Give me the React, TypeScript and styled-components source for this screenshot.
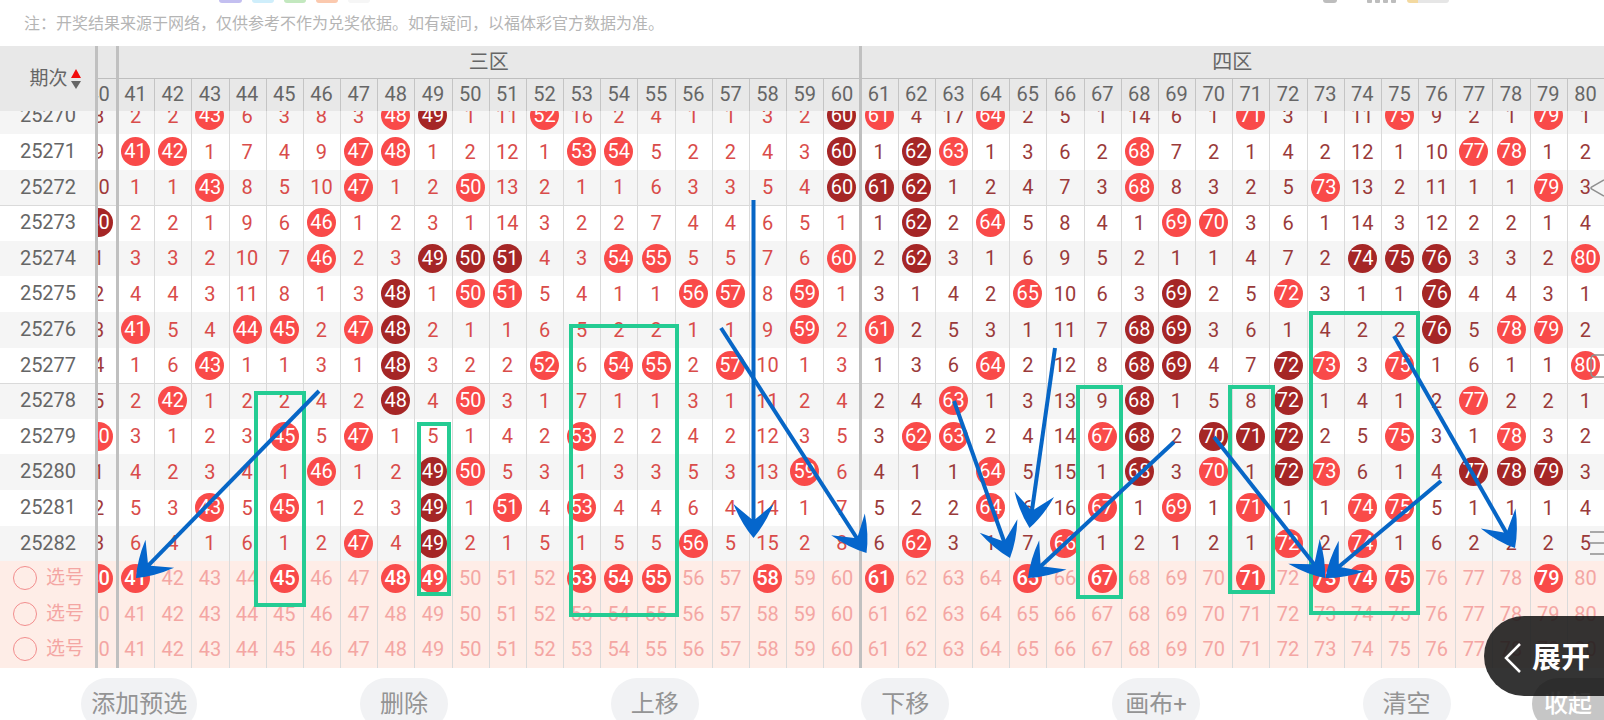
import React, { useState } from 'react';
import styled, { createGlobalStyle, css } from 'styled-components';

const RED = '#f94a49';
const DARK = '#a52626';
const LINE = '#dadada';
const THICK = '#c0c0c0';

const GlobalStyle = createGlobalStyle`
  * { box-sizing: border-box; }
  body {
    margin: 0;
    background: #fff;
    font-family: Roboto, 'Noto Sans CJK SC', sans-serif;
  }
  button { font-family: inherit; border: 0; padding: 0; cursor: pointer; }
`;

const Page = styled.div`
  position: relative;
  height: 100vh;
  overflow: hidden;
  background: #fff;
`;

const StatusBar = styled.div`
  display: flex;
  justify-content: space-between;
  height: 3px;
  padding: 0 155px 0 219px;
`;

const StatusGroup = styled.div<{ $gap: number }>`
  display: flex;
  gap: ${(p) => p.$gap}px;
`;

const StatusChip = styled.span<{ $w: number; $c: string }>`
  width: ${(p) => p.$w}px;
  height: 3px;
  background: ${(p) => p.$c};
  border-radius: 0 0 4px 4px;
`;

const Battery = styled.span`
  width: 42px;
  height: 3px;
  border-radius: 0 0 4px 4px;
  background: linear-gradient(to right, #f3d9a0 11px, #e6e6e6 11px);
`;

const SignalBar = styled.span`
  width: 5px;
  height: 3px;
  background: #bdbdbd;
  border-radius: 0 0 1px 1px;
`;

const Note = styled.p`
  margin: 0;
  padding: 9px 24px 10px;
  font-size: 16px;
  line-height: 24px;
  color: #b5b5b5;
`;

const Chart = styled.table`
  display: block;
  width: 100%;
  font-size: 20px;
  line-height: 24px;
`;

const columns = css`
  display: grid;
  grid-template-columns: 98px 19px repeat(40, minmax(0, 1fr));
`;

const Head = styled.thead`
  ${columns}
  grid-template-rows: 33px 32px;
  position: relative;
  z-index: 1;
  background: #e8e8e8;
  color: #666;
`;

const HeadRow = styled.tr`
  display: contents;
`;

const verticalLine = css<{ $thick?: boolean; $first?: boolean; $line?: string }>`
  box-shadow: ${(p) =>
    p.$thick
      ? `-1px 0 0 ${THICK}, inset 2px 0 0 ${THICK}`
      : p.$first
        ? 'none'
        : `inset 1px 0 0 ${p.$line || LINE}`};
`;

const HeadCell = styled.th<{ $thick?: boolean; $first?: boolean; $line?: string }>`
  display: flex;
  align-items: center;
  justify-content: center;
  padding: 0 0 2px;
  font-weight: 400;
  ${verticalLine}
`;

const ZoneCell = styled(HeadCell)<{ $span: number }>`
  grid-column: span ${(p) => p.$span};
  padding: 0;
  border-bottom: 1px solid #bebebe;
`;

const PeriodHead = styled.th`
  grid-row: 1 / span 2;
  display: flex;
  align-items: center;
  justify-content: center;
  padding: 0 0 0 15px;
  border-right: 3px solid ${THICK};
  font-weight: 400;
`;

const SortButton = styled.button`
  display: flex;
  align-items: center;
  gap: 3px;
  background: none;
  color: #666;
  font-size: 19px;
  line-height: 24px;
`;

const Body = styled.tbody`
  display: block;
  margin-top: -13px;
`;

const Row = styled.tr<{ $tone: 'odd' | 'even' | 'pick'; $ruled?: boolean }>`
  ${columns}
  height: 36px;
  background: ${(p) => ({ odd: '#fff', even: '#f5f5f5', pick: '#feede7' })[p.$tone]};
  ${(p) => p.$ruled && `box-shadow: inset 0 1px 0 ${LINE};`}
  &:nth-child(5n + 3),
  &:nth-child(5n) {
    height: 35px;
  }
`;

const PeriodCell = styled.th`
  display: flex;
  align-items: center;
  justify-content: center;
  padding: 0 0 2px 1px;
  border-right: 3px solid ${THICK};
  font-weight: 400;
  color: #666;
`;

const Cell = styled.td<{ $zone: 2 | 3 | 4; $thick?: boolean; $first?: boolean }>`
  display: flex;
  align-items: center;
  justify-content: center;
  padding: 0 0 1px;
  color: ${(p) => ({ 2: '#a03a3a', 3: '#d94c4a', 4: '#9a3a3a' })[p.$zone]};
  ${verticalLine}
`;

const Clip = styled.span`
  display: flex;
  align-items: center;
  justify-content: flex-end;
  width: 100%;
  height: 100%;
  overflow: hidden;
`;

const ClipInner = styled.span`
  flex: none;
  display: flex;
  justify-content: center;
  width: 37px;
`;

const ball = css<{ $dark?: boolean }>`
  display: flex;
  flex: none;
  align-items: center;
  justify-content: center;
  width: 29px;
  height: 29px;
  padding-bottom: 1px;
  border-radius: 50%;
  background: ${(p) => (p.$dark ? DARK : RED)};
  color: #fff;
`;

const Ball = styled.span<{ $dark?: boolean }>`
  ${ball}
`;

const PickButton = styled.button<{ $on: boolean }>`
  flex: none;
  height: 29px;
  width: 29px;
  padding-bottom: 1px;
  background: none;
  color: #f4a6a3;
  font-size: 20px;
  line-height: 24px;
  ${(p) => p.$on && ball}
  ${(p) => p.$on && 'font-weight: 500;'}
`;

const PickLabel = styled.label`
  display: flex;
  align-items: center;
  gap: 9px;
  width: 100%;
  padding-left: 12px;
  font-size: 19px;
  color: #f4a6a3;
`;

const PickRadio = styled.input`
  appearance: none;
  width: 24px;
  height: 24px;
  margin: 0;
  border: 1px solid #f28e8e;
  border-radius: 50%;
`;

const Toolbar = styled.div`
  display: flex;
  padding-top: 10px;
`;

const Actions = styled.div`
  flex: 1;
  display: flex;
  justify-content: space-around;
`;

const Action = styled.button`
  min-width: 88px;
  height: 52px;
  padding: 0 10px;
  border-radius: 26px;
  background: #f1f2f4;
  color: #949494;
  font-size: 24px;
  line-height: 32px;
`;

const Collapse = styled.button`
  width: 72px;
  height: 52px;
  border-radius: 26px 0 0 26px;
  background: #c6c6c6;
  color: #fff;
  font-size: 24px;
  font-weight: 500;
  line-height: 32px;
`;

const Expand = styled.button`
  position: absolute;
  z-index: 3;
  right: 0;
  bottom: 24px;
  display: flex;
  align-items: center;
  gap: 11px;
  width: 120px;
  height: 80px;
  padding: 4px 0 0 20px;
  border-radius: 40px 0 0 40px;
  background: rgba(24, 24, 24, 0.88);
  color: #fff;
  font-size: 29px;
  font-weight: 700;
  line-height: 40px;
`;

const Drawing = styled.svg`
  position: absolute;
  z-index: 2;
  top: 0;
  left: 0;
  width: 100%;
  height: 720px;
  pointer-events: none;
`;

const SideMarks = styled.svg`
  position: absolute;
  z-index: 2;
  right: 0;
  top: 176px;
`;

/* A plain number is a miss count; "r" is a drawn number, "d" a repeated one. */
const DRAWS: [string, string, string, string][] = [
  ['25270', '8', '2 2 r 6 3 8 3 r d 1 11 r 16 2 4 1 1 3 2 d', 'r 4 17 r 2 5 1 14 6 1 r 3 1 11 r 9 2 1 r 1'],
  ['25271', '9', 'r r 1 7 4 9 r r 1 2 12 1 r r 5 2 2 4 3 d', '1 d r 1 3 6 2 r 7 2 1 4 2 12 1 10 r r 1 2'],
  ['25272', '10', '1 1 r 8 5 10 r 1 2 r 13 2 1 1 6 3 3 5 4 d', 'd d 1 2 4 7 3 r 8 3 2 5 r 13 2 11 1 1 r 3'],
  ['25273', 'd', '2 2 1 9 6 r 1 2 3 1 14 3 2 2 7 4 4 6 5 1', '1 d 2 r 5 8 4 1 r r 3 6 1 14 3 12 2 2 1 4'],
  ['25274', '1', '3 3 2 10 7 r 2 3 d d d 4 3 r r 5 5 7 6 r', '2 d 3 1 6 9 5 2 1 1 4 7 2 d d d 3 3 2 r'],
  ['25275', '2', '4 4 3 11 8 1 3 d 1 r r 5 4 1 1 r r 8 r 1', '3 1 4 2 r 10 6 3 d 2 5 r 3 1 1 d 4 4 3 1'],
  ['25276', '3', 'r 5 4 r r 2 r d 2 1 1 6 5 2 2 1 1 9 r 2', 'r 2 5 3 1 11 7 d d 3 6 1 4 2 2 d 5 r r 2'],
  ['25277', '4', '1 6 r 1 1 3 1 d 3 2 2 r 6 r r 2 r 10 1 3', '1 3 6 r 2 12 8 d d 4 7 d r 3 r 1 6 1 1 r'],
  ['25278', '5', '2 r 1 2 2 4 2 d 4 r 3 1 7 1 1 3 1 11 2 4', '2 4 r 1 3 13 9 d 1 5 8 d 1 4 1 2 r 2 2 1'],
  ['25279', 'r', '3 1 2 3 r 5 r 1 5 1 4 2 r 2 2 4 2 12 3 5', '3 r r 2 4 14 r d 2 d d d 2 5 r 3 1 r 3 2'],
  ['25280', '1', '4 2 3 4 1 r 1 2 d r 5 3 1 3 3 5 3 13 r 6', '4 1 1 r 5 15 1 d 3 r 1 d r 6 1 4 d d d 3'],
  ['25281', '2', '5 3 r 5 r 1 2 3 d 1 r 4 r 4 4 6 4 14 1 7', '5 2 2 r 6 16 r 1 r 1 r 1 1 r r 5 1 1 1 4'],
  ['25282', '3', '6 4 1 6 1 2 r 4 d 2 1 5 1 5 5 r 5 15 2 8', '6 r 3 1 7 r 1 2 1 2 1 r 2 r 1 6 2 2 2 5'],
];

const NUMBERS = Array.from({ length: 40 }, (_, i) => 41 + i);
const RULED = ['25273', '25278'];
const FIRST_PICKS = [40, 41, 45, 48, 49, 53, 54, 55, 58, 61, 65, 67, 71, 73, 74, 75, 79];
const ACTIONS = ['添加预选', '删除', '上移', '下移', '画布+', '清空'];

const BOXES = [
  [256, 393, 48, 212],
  [419, 424, 30, 170],
  [571, 326, 106, 289],
  [1078, 387, 43, 210],
  [1230, 387, 43, 205],
  [1311, 313, 107, 300],
];

const ARROWS = [
  [319, 391, 136, 578],
  [753.5, 200, 753.5, 538],
  [721, 328, 866.5, 553],
  [954, 401, 1010, 558],
  [1055, 348, 1029.5, 528],
  [1174, 442, 1028, 578],
  [1214, 437, 1325, 578],
  [1441, 481, 1325.5, 578],
  [1394, 336, 1515, 548],
];

function Arrow({ from }: { from: number[] }) {
  const [x1, y1, x2, y2] = from;
  const len = Math.hypot(x2 - x1, y2 - y1);
  const ux = (x2 - x1) / len;
  const uy = (y2 - y1) / len;
  const at = (back: number, side: number) =>
    `${(x2 - ux * back - uy * side).toFixed(1)},${(y2 - uy * back + ux * side).toFixed(1)}`;
  const head = `M${x2},${y2} Q${at(14, 12)} ${at(34, 20)} L${at(19, 2)} L${at(19, -2)} L${at(34, -20)} Q${at(14, -12)} ${x2},${y2}Z`;
  return (
    <>
      <line x1={x1} y1={y1} x2={x2 - ux * 17} y2={y2 - uy * 17} stroke="#0766c6" strokeWidth={4} />
      <path d={head} fill="#0566cc" />
    </>
  );
}

function Value({ value, number }: { value: string; number: number }) {
  if (value === 'r' || value === 'd') return <Ball $dark={value === 'd'}>{number}</Ball>;
  return <>{value}</>;
}

function PickRow({ index }: { index: number }) {
  const [picked, setPicked] = useState<number[]>(index === 0 ? FIRST_PICKS : []);
  const toggle = (n: number) =>
    setPicked((p) => (p.includes(n) ? p.filter((v) => v !== n) : [...p, n]));
  const pick = (n: number) => (
    <PickButton type="button" $on={picked.includes(n)} onClick={() => toggle(n)}>
      {n}
    </PickButton>
  );
  return (
    <Row $tone="pick">
      <PeriodCell scope="row">
        <PickLabel>
          <PickRadio type="radio" name="pick" />
          选号
        </PickLabel>
      </PeriodCell>
      <Cell $zone={2} $first>
        <Clip>
          <ClipInner>{pick(40)}</ClipInner>
        </Clip>
      </Cell>
      {NUMBERS.map((n) => (
        <Cell key={n} $zone={n > 60 ? 4 : 3} $thick={n === 41 || n === 61}>
          {pick(n)}
        </Cell>
      ))}
    </Row>
  );
}

export default function App() {
  return (
    <Page>
      <GlobalStyle />
      <StatusBar>
        <StatusGroup $gap={10}>
          <StatusChip $w={23} $c="#c3bff0" />
          <StatusChip $w={22} $c="#cfeefb" />
          <StatusChip $w={22} $c="#c3e8bf" />
          <StatusChip $w={22} $c="#fbc9ae" />
          <StatusChip $w={22} $c="#f6f6f6" />
        </StatusGroup>
        <StatusGroup $gap={11}>
          <StatusGroup $gap={30}>
            <StatusChip $w={14} $c="#bdbdbd" />
            <StatusGroup $gap={3}>
              <SignalBar />
              <SignalBar />
              <SignalBar />
              <SignalBar />
            </StatusGroup>
          </StatusGroup>
          <Battery />
        </StatusGroup>
      </StatusBar>
      <Note>注：开奖结果来源于网络，仅供参考不作为兑奖依据。如有疑问，以福体彩官方数据为准。</Note>

      <Chart>
        <Head>
          <HeadRow>
            <PeriodHead scope="col">
              <SortButton type="button">
                期次
                <svg width="10" height="20" viewBox="0 0 10 20" aria-hidden="true">
                  <path d="M5 0L10 9H0Z" fill="#f20d0d" />
                  <path d="M0 12H10L5 20Z" fill="#666" />
                </svg>
              </SortButton>
            </PeriodHead>
            <ZoneCell $span={1} $first />
            <ZoneCell $span={20} $thick scope="colgroup">
              三区
            </ZoneCell>
            <ZoneCell $span={20} $thick scope="colgroup">
              四区
            </ZoneCell>
          </HeadRow>
          <HeadRow>
            <HeadCell $first scope="col">
              <Clip>
                <ClipInner>40</ClipInner>
              </Clip>
            </HeadCell>
            {NUMBERS.map((n) => (
              <HeadCell key={n} scope="col" $thick={n === 41 || n === 61} $line="#c4c4c4">
                {n}
              </HeadCell>
            ))}
          </HeadRow>
        </Head>
        <Body>
          {DRAWS.map(([period, forty, third, fourth], r) => (
            <Row key={period} $tone={r % 2 ? 'odd' : 'even'} $ruled={RULED.includes(period)}>
              <PeriodCell scope="row">{period}</PeriodCell>
              <Cell $zone={2} $first>
                <Clip>
                  <ClipInner>
                    <Value value={forty} number={40} />
                  </ClipInner>
                </Clip>
              </Cell>
              {`${third} ${fourth}`.split(' ').map((value, i) => (
                <Cell key={i} $zone={i < 20 ? 3 : 4} $thick={i === 0 || i === 20}>
                  <Value value={value} number={NUMBERS[i]} />
                </Cell>
              ))}
            </Row>
          ))}
          <PickRow index={0} />
          <PickRow index={1} />
          <PickRow index={2} />
        </Body>
      </Chart>

      <Toolbar>
        <Actions>
          {ACTIONS.map((label) => (
            <Action key={label} type="button">
              {label}
            </Action>
          ))}
        </Actions>
        <Collapse type="button">收起</Collapse>
      </Toolbar>

      <Drawing viewBox="0 0 1604 720" preserveAspectRatio="none" aria-hidden="true">
        {BOXES.map(([x, y, w, h]) => (
          <rect key={x} x={x} y={y} width={w} height={h} fill="none" stroke="#24cc93" strokeWidth={4} />
        ))}
        {ARROWS.map((a) => (
          <Arrow key={a.join()} from={a} />
        ))}
      </Drawing>

      <SideMarks width="14" height="384" viewBox="0 0 14 384" fill="none" stroke="#8f8f8f" strokeWidth="1.5" aria-hidden="true">
        <path d="M14 4L1.5 11Q0.5 12 1.5 13L14 20" />
        <path d="M14 179H5Q1 179 1 183V197Q1 201 5 201H14" />
        <path d="M0 356H14M0 367H14M0 378H14" />
      </SideMarks>

      <Expand type="button">
        <svg width="17" height="30" viewBox="0 0 17 30" fill="none" stroke="#fff" strokeWidth="2.5" aria-hidden="true">
          <path d="M16 1L2 15L16 29" />
        </svg>
        展开
      </Expand>
    </Page>
  );
}
